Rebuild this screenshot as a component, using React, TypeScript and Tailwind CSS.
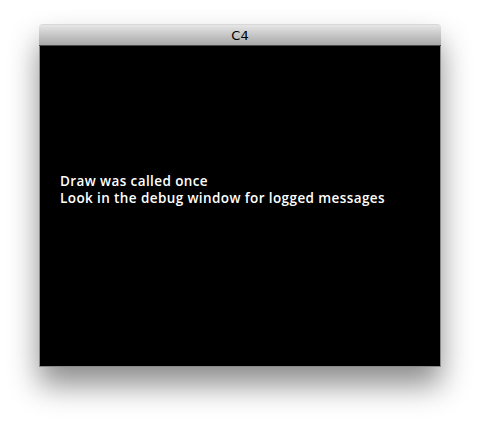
export default function App() {
  return (
    <div className="w-[480px] h-[422px] bg-white pt-[24px] pl-[39px]">
      <div className="w-[402px] flex flex-col shadow-[0_18px_30px_rgba(0,0,0,0.45)] rounded-t-[4px]">
        <div className="h-[22px] rounded-t-[4px] border-t border-[#d8d8d8] bg-gradient-to-b from-[#e6e6e6] to-[#a8a8a8] border-b border-b-[#4a4a4a] flex items-center justify-center text-[13px] text-black font-['DejaVu_Sans',sans-serif] leading-none">
          C4
        </div>
        <div className="h-[321px] bg-black border-x border-b border-[#8a8a8a] pl-[20px] pt-[127px] text-white text-[13.5px] font-semibold tracking-[0.4px] leading-[17px] font-['Open_Sans',sans-serif]">
          <p>Draw was called once</p>
          <p>Look in the debug window for logged messages</p>
        </div>
      </div>
    </div>
  );
}
